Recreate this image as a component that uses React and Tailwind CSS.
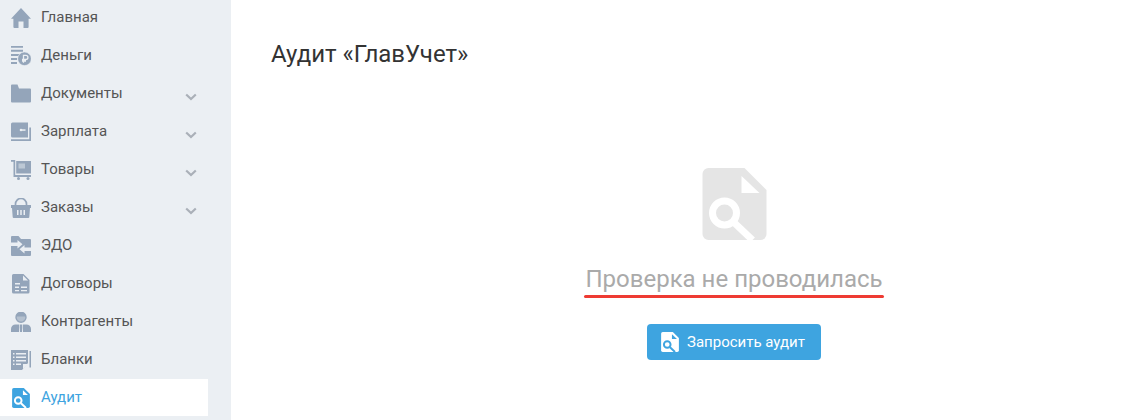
const G = "#94a5ba";
const B = "#3ea4e0";

function Svg({ children, fill = G }) {
  return (
    <svg width="20" height="20" viewBox="0 0 20 20" fill={fill} className="shrink-0">
      {children}
    </svg>
  );
}

function DocSearch({ w, h, fill, hole }) {
  return (
    <svg width={w} height={h} viewBox="0 0 64 72" className="shrink-0">
      <path d="M6 0H42L64 22V66a6 6 0 0 1-6 6H6a6 6 0 0 1-6-6V6a6 6 0 0 1 6-6Z" fill={fill} />
      <path d="M39 8V25H57Z" fill={hole} />
      <path d="M32 55L50 72" stroke={hole} strokeWidth="7" fill="none" />
      <circle cx="22" cy="45" r="12" fill={fill} stroke={hole} strokeWidth="7" />
    </svg>
  );
}

const icons = {
  home: (
    <Svg>
      <path d="M10 0L20 10.7H17.6V19a1 1 0 0 1-1 1H12.5V13.5H7.5V20H3.4a1 1 0 0 1-1-1V10.700H0Z" />
    </Svg>
  ),
  money: (
    <Svg>
      <path d="M0 0H12V1.800H0ZM0 3.800H12V5.800H0ZM0 8H9V10H0ZM0 12H6V14H0ZM0 16H6V18H0Z" />
      <circle cx="13.500" cy="12.800" r="6.800" stroke="#ebeff3" strokeWidth="0.600" />
      <path d="M12.500 16.800V9.300H14.800a2.100 2.100 0 0 1 0 4.200H11M11 15H15" stroke="#ebeff3" strokeWidth="1.300" fill="none" />
    </Svg>
  ),
  folder: (
    <Svg>
      <path d="M1 .5H6.500L8 4.500H19a1 1 0 0 1 1 1V17.500a1 1 0 0 1-1 1H1a1 1 0 0 1-1-1V1.500a1 1 0 0 1 1-1Z" />
    </Svg>
  ),
  wallet: (
    <Svg>
      <path d="M1.500 .500H17V15.500H1.500a1.500 1.500 0 0 1-1.500-1.500V2a1.500 1.500 0 0 1 1.500-1.500Z" />
      <path d="M18.300 5.500H20V19H0V17.300H18.300Z" />
      <path d="M9 7.300H14.500V8.800H9Z" fill="#ebeff3" />
      <circle cx="10" cy="8" r="1.300" fill="#ebeff3" />
    </Svg>
  ),
  goods: (
    <Svg>
      <path d="M0 0H4.200V15H20V17H2.500V1.800H0Z" />
      <path d="M5.200 1H20V13.500H5.200Z" />
      <path d="M7.500 3.500H14V8.500H7.500Z" fill="#bcc8d5" />
      <circle cx="7.500" cy="18.400" r="1.500" />
      <circle cx="17" cy="18.400" r="1.500" />
    </Svg>
  ),
  basket: (
    <Svg>
      <path d="M4.500 7.500V6a5.500 5.500 0 0 1 11 0V7.500" fill="none" stroke={G} strokeWidth="1.700" />
      <path d="M0 7H20V10H19L18.300 19a1 1 0 0 1-1 1H2.700a1 1 0 0 1-1-1L1 10H0Z" />
      <path d="M6 12H7.500V17H6ZM9.250 12H10.750V17H9.250ZM12.500 12H14V17H12.500Z" fill="#ebeff3" />
    </Svg>
  ),
  edo: (
    <Svg>
      <path d="M1 0H7.500L10 3H19a1 1 0 0 1 1 1V19a1 1 0 0 1-1 1H1a1 1 0 0 1-1-1V1a1 1 0 0 1 1-1Z" />
      <path d="M0 6.500H6.500V4L11.500 8.200L6.500 12.400V10H0Z" fill="#ebeff3" />
      <path d="M20 11.500H13.500V9L8.500 13.200L13.500 17.400V15H20Z" fill="#ebeff3" />
    </Svg>
  ),
  contracts: (
    <Svg>
      <path d="M2.500 0H12.500L18.500 6V18a1.500 1.500 0 0 1-1.500 1.500H2.500A1.500 1.500 0 0 1 1 18V1.500A1.500 1.500 0 0 1 2.500 0Z" />
      <path d="M12 1.500V6.500H17Z" fill="#ebeff3" />
      <path d="M4 9H9V10.500H4ZM4 12.500H8V14H4ZM10 12.500H16V14H10ZM4 16H8V17.300H4ZM10 16H16V17.300H10Z" fill="#ebeff3" />
    </Svg>
  ),
  person: (
    <Svg>
      <circle cx="10" cy="5.300" r="5" fill="#b4c0ce" stroke={G} strokeWidth="1.400" />
      <path d="M5 4.500a5 4 0 0 1 10 0Z" />
      <path d="M5.500 12.500H8.300L8 20H0V17a4.500 4.500 0 0 1 4.500-4.500ZM11.700 12.500H15.500A4.500 4.500 0 0 1 20 17V20H12Z" />
      <path d="M9 12.500H11L11.200 15.500L11 20H9L8.800 15.500Z" />
    </Svg>
  ),
  blanks: (
    <Svg>
      <path d="M0 0H17V13L11 20H0Z" />
      <path d="M18.500 1H20V17.500H18.500Z" />
      <path d="M2 3H3.500V4.500H2ZM5 3H15V4.500H5ZM2 6.500H3.500V8H2ZM5 6.500H15V8H5ZM2 10H3.500V11.500H2ZM5 10H15V11.500H5ZM2 13.500H3.500V15H2ZM5 13.500H10V15H5Z" fill="#ebeff3" />
      <path d="M12 19V14H17Z" fill="#ebeff3" />
    </Svg>
  ),
  audit: <DocSearch w={18} h={20} fill={B} hole="#fff" />,
};

const items = [
  ["Главная", "home"],
  ["Деньги", "money"],
  ["Документы", "folder", true],
  ["Зарплата", "wallet", true],
  ["Товары", "goods", true],
  ["Заказы", "basket", true],
  ["ЭДО", "edo"],
  ["Договоры", "contracts"],
  ["Контрагенты", "person"],
  ["Бланки", "blanks"],
  ["Аудит", "audit", false, true],
];

function Row({ label, icon, chevron, active }) {
  return (
    <div
      className={
        "flex h-[37px] w-[208px] items-center pl-[11px] text-[15px] " +
        (active ? "bg-white text-[#3ea4e0]" : "text-[#555555]")
      }
    >
      <span className="flex w-5 justify-center">{icons[icon]}</span>
      <span className="ml-[10px]">{label}</span>
      {chevron && (
        <svg width="12" height="8" viewBox="0 0 12 8" className="ml-auto mr-[11px] mt-[6px]" fill="none">
          <path d="M1.200 1.500L6 6L10.800 1.500" stroke="#aab0b8" strokeWidth="2.200" />
        </svg>
      )}
    </div>
  );
}

export default function App() {
  return (
    <div className="flex h-[420px] w-[1124px] overflow-hidden bg-white font-['Roboto',sans-serif]">
      <aside className="-mt-px flex h-[421px] w-[231px] shrink-0 flex-col gap-px bg-[#ebeff3]">
        {items.map(([label, icon, chevron, active]) => (
          <Row key={label} label={label} icon={icon} chevron={chevron} active={active} />
        ))}
      </aside>
      <main className="flex-1">
        <h1 className="ml-10 mt-[40px] text-[24px] font-normal leading-[28px] text-[#333333]">Аудит «ГлавУчет»</h1>
        <div className="mt-[100px] flex flex-col items-center pl-[113px]">
          <DocSearch w={65} h={72} fill="#e5e5e5" hole="#fff" />
          <p className="mt-[24px] text-[24px] leading-[30px] text-[#aaaaaa]">Проверка не проводилась</p>
          <div className="mt-[1px] h-[3px] w-[300px] rounded-full bg-[#ee3b33]"></div>
          <button className="mt-[26px] flex h-9 w-[174px] items-center rounded bg-[#3ea4e0] pl-[14px] text-[15px] text-white">
            <DocSearch w={18} h={20} fill="#fff" hole={B} />
            <span className="ml-[8px]">Запросить аудит</span>
          </button>
        </div>
      </main>
    </div>
  );
}
